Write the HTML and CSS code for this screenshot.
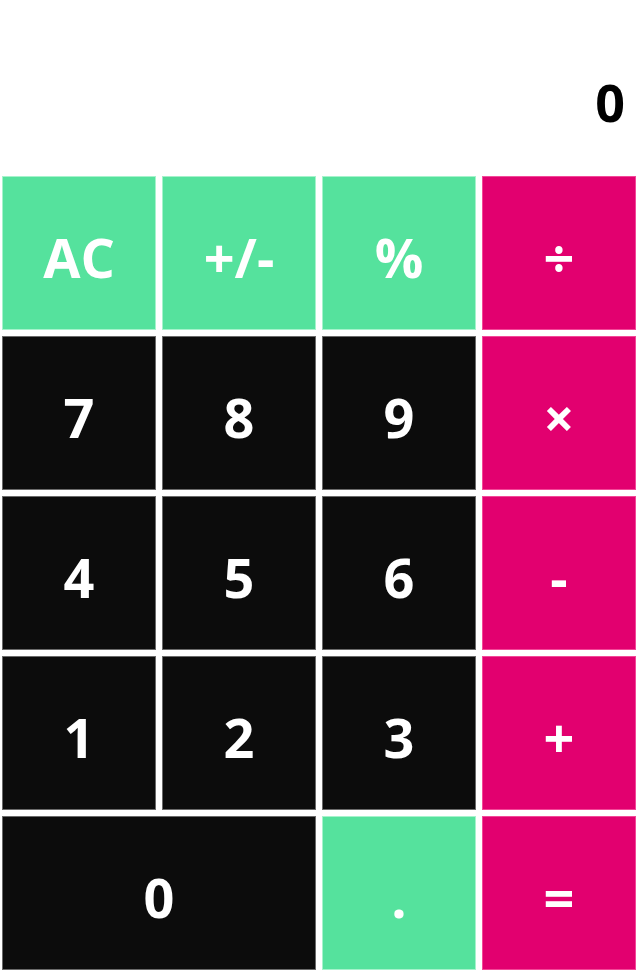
FILE: index.html
```html
<!DOCTYPE html>
<html lang="en">
<head>
<meta charset="utf-8">
<title>Calculator</title>
<link rel="stylesheet" href="styles.css">
</head>
<body>
<div class="calc">
  <div class="display">0</div>
  <div class="keys">
    <div class="key fn">AC</div>
    <div class="key fn">+/-</div>
    <div class="key fn">%</div>
    <div class="key op">÷</div>
    <div class="key num">7</div>
    <div class="key num">8</div>
    <div class="key num">9</div>
    <div class="key op">×</div>
    <div class="key num">4</div>
    <div class="key num">5</div>
    <div class="key num">6</div>
    <div class="key op">-</div>
    <div class="key num">1</div>
    <div class="key num">2</div>
    <div class="key num">3</div>
    <div class="key op">+</div>
    <div class="key num wide">0</div>
    <div class="key fn">.</div>
    <div class="key op">=</div>
  </div>
</div>
</body>
</html>
```

FILE: styles.css
```css
html, body {
  margin: 0;
  padding: 0;
  background: #ffffff;
}

.calc {
  width: 640px;
  height: 976px;
  font-family: "Open Sans", "Noto Sans", sans-serif;
  font-weight: 700;
}

.display {
  box-sizing: border-box;
  height: 176px;
  padding: 76px 15px 0 0;
  text-align: right;
  font-size: 52px;
  line-height: 52px;
  color: #000000;
}

.keys {
  display: grid;
  grid-template-columns: repeat(4, 154px);
  grid-auto-rows: 154px;
  gap: 6px;
  padding-left: 2px;
}

.key {
  box-sizing: border-box;
  display: flex;
  align-items: center;
  justify-content: center;
  padding-top: 8px;
  font-size: 54px;
  color: #ffffff;
  border: 1px solid rgba(150, 150, 150, 0.5);
}

.fn {
  background: #55e29d;
  border-color: rgba(220, 255, 235, 0.6);
}

.op {
  background: #e2006f;
  border-color: rgba(255, 120, 180, 0.6);
}

.num {
  background: #0c0c0c;
  border-color: #6a6a6a;
}

.wide {
  grid-column: span 2;
}
```
